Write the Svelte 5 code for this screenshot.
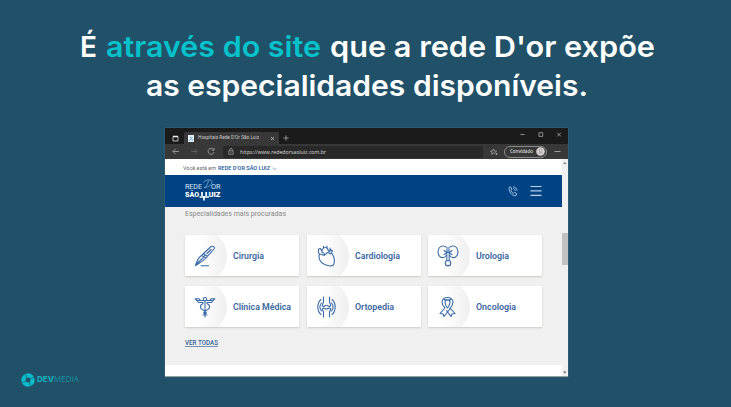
<script>
  const cards = [
    { name: 'Cirurgia', width: 31, icon: 'scalpel' },
    { name: 'Cardiologia', width: 45, icon: 'heart' },
    { name: 'Urologia', width: 33, icon: 'kidneys' },
    { name: 'Clínica Médica', width: 58, icon: 'caduceus' },
    { name: 'Ortopedia', width: 39, icon: 'joint' },
    { name: 'Oncologia', width: 40, icon: 'ribbon' }
  ];
</script>

{#snippet fit(text, width, size, cls)}
  <svg class="fit {cls}" width={width} height={size} font-size={size}>
    <text x="0" y={size * 0.8} textLength={width} lengthAdjust="spacingAndGlyphs">{text}</text>
  </svg>
{/snippet}

<main class="slide">
  <h1>
    <span class="line">
      {@render fit('É', 17, 29, 'head')}
      {@render fit('através do site', 215, 29, 'head accent')}
      {@render fit("que a rede D'or expõe", 325, 29, 'head')}
    </span>
    <span class="line">{@render fit('as especialidades disponíveis.', 442, 29, 'head')}</span>
  </h1>

  <section class="window">
    <div class="tabs">
      <svg class="tabicon" width="7" height="7" viewBox="0 0 7 7"><path d="M1 1.5h5v4.5h-5z" fill="none" stroke="#ddd" stroke-width=".8" /><path d="M1 1.5h5" stroke="#eee" stroke-width="1.5" /></svg>
      <div class="tab">
        <svg width="6" height="7" viewBox="0 0 6 7"><path d="M0 0h6v7H0z" fill="#e4eff5" /><path d="M1 6l3.5-4M2 2l2 1M3.500 5h2" stroke="#659bc2" stroke-width=".8" /></svg>
        {@render fit('Hospitais Rede D’Or São Luiz', 61, 5.5, 'tabtext')}
        <svg class="close" width="5" height="5" viewBox="0 0 5 5"><path d="M1 1l3 3M4 1l-3 3" stroke="#ccc" stroke-width=".8" /></svg>
      </div>
      <svg class="plus" width="6" height="6" viewBox="0 0 6 6"><path d="M3 .3v5.400M.3 3h5.400" stroke="#bbb" stroke-width=".7" /></svg>
      <svg class="controls" width="42" height="7" viewBox="0 0 42 7" fill="none" stroke="#aaa" stroke-width=".8"><path d="M.5 3.500h4M19 1.700h3.700v3.700H19zM37.200 1.700l3.700 3.700M40.900 1.700l-3.700 3.700" /></svg>
    </div>
    <div class="toolbar">
      <svg class="nav" width="46" height="9" viewBox="0 0 46 9" fill="none" stroke="#aaa" stroke-width=".8">
        <path d="M7 4.500H1M3.700 1.800L1 4.500l2.700 2.700" /><path d="M19 4.500h6M22.300 1.800L25 4.500l-2.700 2.700" stroke="#666" /><path d="M41.500 2.500a3 3 0 1 0 .5 2.500M42 1v2.200h-2.300" />
      </svg>
      <div class="address">
        <svg width="6" height="7" viewBox="0 0 6 7" fill="none" stroke="#aaa" stroke-width=".7"><path d="M.8 2.800h4.400v3.500H.8zM1.700 2.800V1.700a1.300 1.300 0 0 1 2.600 0v1.100M3 4v1" /></svg>
        {@render fit('https://www.rededorsaoluiz.com.br', 86, 6, 'url')}
      </div>
      <svg class="star" width="8" height="8" viewBox="0 0 8 8" fill="none" stroke="#bbb" stroke-width=".7"><path d="M5 5.500L3.500 4.900 1.800 6.500 2 4.600.5 3.300l2-.3 1-1.900 1 1.900 2 .3-1.300 1.300M5.500 6h2M6.500 5v2" /></svg>
      <div class="guest">
        {@render fit('Convidado', 23, 5.5, 'guesttext')}
        <svg width="9" height="9" viewBox="0 0 9 9"><circle cx="4.500" cy="4.500" r="4.300" fill="#d6d3cf" /><circle cx="4.500" cy="3.500" r="1.400" fill="none" stroke="#888" stroke-width=".6" /><path d="M2 6.500c1-2 4-2 5 0z" fill="#aaa" /></svg>
      </div>
      <svg class="dots" width="7" height="3" viewBox="0 0 7 3"><path d="M.5 1.500h6" stroke="#aaa" stroke-width=".9" /></svg>
    </div>

    <div class="viewport">
      <div class="page">
        <div class="location">
          {@render fit('Você está em', 33, 6.2, 'where')}
          {@render fit('REDE D’OR SÃO LUIZ', 52, 6.2, 'place')}
          <svg width="5" height="4" viewBox="0 0 5 4"><path d="M.4 .8l2.100 2.100L4.600.8" fill="none" stroke="#6f97bd" stroke-width=".8" /></svg>
        </div>
        <header>
          <svg class="logo" width="37" height="23" viewBox="0 0 37 23" fill="#fff">
            <text x="0" y="9.800" font-size="7.400" textLength="17" lengthAdjust="spacingAndGlyphs" fill="#dce7f3">REDE</text>
            <text x="26" y="9.800" font-size="7.400" textLength="9.500" lengthAdjust="spacingAndGlyphs" fill="#dce7f3">OR</text>
            <path d="M19.500 8.500C22 7 23 4 23.500 1.500M18.500 3.500C20 .3 27 .2 27 2.500c0 3-3 6-8 6" fill="none" stroke="#9db9d8" stroke-width=".7" />
            <text class="bold" x="0" y="18.300" font-size="6.800" textLength="14" lengthAdjust="spacingAndGlyphs">SÃO</text>
            <text class="bold" x="23.500" y="18.300" font-size="6.800" textLength="12" lengthAdjust="spacingAndGlyphs">UIZ</text>
            <path d="M17 13v4M21.200 13v4M14.500 18h9.500M19 17v4.500" fill="none" stroke="#fff" stroke-width="1.700" />
          </svg>
          <svg class="phone" width="10" height="11" viewBox="0 0 10 11" fill="none" stroke="#b9cde5" stroke-width=".9"><path d="M1.200 1.300L2.700.9l1.200 2.200-1 1.200c.5 1.500 1.400 2.400 2.600 3l1.100-1 2.100 1.300-.7 2C4 10.500.2 5 1.200 1.300zM5.200.8c2 .1 3.700 1.800 3.900 3.900M5.200 2.700c1 .1 1.900.9 2 2" /></svg>
          <svg class="menu" width="12" height="12" viewBox="0 0 12 12"><path d="M.5 1.500h11M.5 5.900h11M.5 10.300h11" stroke="#bed0e6" stroke-width="1.200" /></svg>
        </header>
        <div class="content">
          {@render fit('Especialidades mais procuradas', 101, 7, 'subtitle')}
          <div class="grid">
            {#each cards as card}
              <article>
                <div class="disc">
                  <svg width="22" height="22" viewBox="0 0 22 22" fill="none" stroke="#3a6ba8" stroke-width="1.100" stroke-linejoin="round" stroke-linecap="round">
                    {#if card.icon === 'scalpel'}
                      <path d="M1.500 20.500C3 15.500 5 12 7.500 10.500L16.500 2c1.500-1.300 5-.6 3.500 2L12 13c-2 2.400-5 4-10.500 7.500zM7.500 10.500L12 13M9.500 8.700l4 2.600M13 8.500l4-4M3 18.500l6-5.500M7 20.800h7.500M9 13l2-3" />
                    {:else if card.icon === 'heart'}
                      <path d="M3.500 9C2 13 4 17.500 8.500 19.500c3 1.200 7 2.200 9 .5 1.200-3 1-8-1.500-11.500M3.500 9L2.500 7.500V4l2-.5 1.200 2.500M6 7.500V5C7.500 1.500 11.500 2 12 5l1 1.500 1.500-2 2 1.500-2 3c-2-2-4-1.800-5 .5M7.500 3V1.200M11 2.500V1M14 6.500V3M6 7.500c2 0 3 1.500 2 3M3.500 9.500c2-1 3 1 5 1" />
                    {:else if card.icon === 'kidneys'}
                      <path d="M10.300 3C8.500.5 4.500.3 2.500 2.500.5 5 .5 9.500 3 11.700c2 1.500 5.500 1 6-1.200M11.700 3c1.800-2.500 5.800-2.700 7.800-.5 2 2.500 2 7-.5 9.200-2 1.500-5.500 1-6-1.200M10 4v4M12 4v4M7 5.500l3 2h2l3-2M7 9.500l3-2M15 9.500l-3-2M9.800 9v6.500M12.200 9v6.500" />
                      <circle cx="11" cy="18.200" r="2.700" />
                    {:else if card.icon === 'caduceus'}
                      <circle cx="11" cy="3.200" r="1.700" />
                      <path d="M11 5v16M9.500 4.500h-3L5 2.800H1.200L3 4.500h6M12.500 4.500h3L17 2.800h3.800L19 4.500h-6M3 4.500l1.500 2H9M19 4.500l-1.500 2H13M9 7.500c-3.500 1.500-3.500 5 0 6.500 4.500 1.500 4 4 0 5M13 7.500c3.500 1.500 3.500 5 0 6.500-4.500 1.500-4 4 0 5" />
                    {:else if card.icon === 'joint'}
                      <path d="M7.500 1v4.500C7.500 8 5.500 8.500 6.500 10c1 1.300 2.500-.7 4-.7s3 2 4 .7c1-1.500-1-2-1-4.500V1M7.500 21v-4.500C7.500 14 5.500 14 6.500 12.500c1-1.300 2.500.5 4 .5s3-1.800 4-.5c1 1.500-1 1.500-1 4V21M5 3.500C.8 7 .8 15 5 18.500M16 3.500c4.200 3.500 4.200 11.500 0 15M5.500 7C3.500 9.500 3.500 12.500 5.500 15M15.500 7c2 2.500 2 5.500 0 8" />
                    {:else}
                      <path d="M5 6c0-6 11-6 11 0 0 3-2 5-4 8L7 20.500 6 18l-3-.5 5-5.500C6 10 5 8 5 6zM8 6c0-3 5-3 5 0 0 2-1 4-2.500 6C9 10 8 8 8 6zM6.500 3c2 1.500 6 1.500 8 0M9.500 14.500l4.500 6 1-2.500 3-.5-5-5.500" />
                    {/if}
                  </svg>
                </div>
                {@render fit(card.name, card.width, 9, 'label')}
              </article>
            {/each}
          </div>
          <div class="all">{@render fit('VER TODAS', 33, 7, 'alltext')}</div>
        </div>
        <div class="bottom"></div>
      </div>
      <div class="scroll">
        <svg width="6" height="7" viewBox="0 0 6 7"><path d="M1.200 5l1.600-2 1.600 2z" fill="#777" /></svg>
        <div class="thumb"></div>
        <svg class="down" width="6" height="7" viewBox="0 0 6 7"><path d="M1.200 2.500l1.600 2 1.600-2z" fill="#555" /></svg>
      </div>
    </div>
  </section>

  <footer>
    <svg width="14" height="14" viewBox="0 0 14 14"><circle cx="7" cy="7" r="4.600" fill="none" stroke="#09bdca" stroke-width="4.200" /><path d="M4.500 1l1 3.800M13 4.500L9.200 5.500M9.500 13l-1-3.800M1 9.500L4.800 8.500" stroke="#205168" stroke-width=".7" /></svg>
    {@render fit('DEV', 17, 8, 'dev')}{@render fit('MEDIA', 25, 8, 'media')}
  </footer>
</main>

<style>
  :global(body) { margin: 0; }
  * { box-sizing: border-box; }
  .slide { width: 731px; height: 407px; background: #205168; display: flex; flex-direction: column; align-items: center; overflow: hidden; font-family: Roboto, sans-serif; }
  svg { display: block; flex: none; }
  .fit { overflow: visible; fill: currentColor; }
  h1 { margin: 0; padding: 34px 0 0 3px; height: 128px; width: 731px; color: #fff; font-family: Inter, sans-serif; font-weight: 600; flex: none; }
  .line { display: flex; height: 39px; justify-content: center; gap: 9px; }
  h1 :global(.accent) { color: #04c2cb; }
  .window { width: 403px; height: 249px; margin-right: -2px; background: #fff; display: flex; flex-direction: column; border-bottom: 1px solid #909da3; box-shadow: 0 0 1px #718b98; flex: none; }
  .tabs { height: 16px; background: #1b1b1b; display: flex; align-items: center; padding: 4px 7px 0 7px; flex: none; }
  .tabicon { margin-right: 5px; }
  .tab { width: 95px; height: 12px; background: #383838; display: flex; align-items: center; gap: 4px; padding: 0 4px 0 4px; border-radius: 2px 2px 0 0; color: #ccc; }
  .close { margin-left: auto; }
  .plus { margin-left: 4px; }
  .controls { margin: -8px -1px 0 auto; }
  .toolbar { height: 15px; background: #383838; display: flex; align-items: center; padding-left: 7px; flex: none; }
  .address { width: 260px; height: 12px; margin-left: 5px; padding-left: 5px; background: #292929; display: flex; align-items: center; gap: 6px; color: #ddd; border-radius: 2px; font-family: "Open Sans", sans-serif; }
  .star { margin-left: 7px; }
  .guest { width: 43px; height: 12px; border: 1px solid #8b8b8b; border-radius: 7px; margin-left: 6px; padding-left: 5px; display: flex; align-items: center; gap: 3px; color: #ddd; font-family: "Open Sans", sans-serif; font-weight: 600; }
  .dots { margin-left: 7px; }
  .viewport { flex: 1; display: flex; min-height: 0; }
  .page { width: 397px; display: flex; flex-direction: column; }
  .location { height: 16px; display: flex; align-items: center; padding: 3px 0 0 18px; gap: 2px; color: #666; flex: none; }
  .location :global(.place) { color: #2c629e; font-weight: 600; }
  header { height: 32px; background: #004385; display: flex; align-items: center; padding: 0 20px; flex: none; }
  .logo { margin-top: -1px; }
  .logo .bold { font-weight: 900; }
  .phone { margin-left: auto; }
  .menu { margin-left: 12px; }
  .content { height: 158px; background: #f0f0f0; padding: 3px 20px 0; color: #888; flex: none; }
  .grid { display: grid; grid-template-columns: repeat(3, 114px); justify-content: space-between; row-gap: 10px; margin-top: 18px; }
  article { height: 41px; background: #fff; border-radius: 1px; box-shadow: 0 1px 2px #ccc9c5; display: flex; align-items: center; overflow: hidden; color: #3a689f; font-weight: 600; }
  article :global(.label) { margin-top: 1px; }
  .disc { width: 42px; height: 54px; border-radius: 0 27px 27px 0; background: linear-gradient(90deg, #fff 35%, #efefef); margin-right: 6px; padding-left: 9px; display: flex; align-items: center; flex: none; }
  .all { width: 33px; margin-top: 12px; border-bottom: 1px solid #7693b3; color: #326198; font-weight: 500; }
  .bottom { flex: 1; }
  .scroll { width: 6px; background: #f0f0f0; display: flex; flex-direction: column; }
  .thumb { height: 32px; margin-top: 67px; background: #c1c1c1; }
  .down { margin-top: auto; }
  footer { width: 731px; display: flex; align-items: center; padding: 0 21px; height: 7px; color: #14aab9; font-family: Inter, sans-serif; margin-top: -1px; }
  footer :global(.dev) { margin: 1px 0 0 2px; font-weight: 800; }
  footer :global(.media) { margin-top: 1px; color: #188b9f; font-weight: 400; }
</style>
